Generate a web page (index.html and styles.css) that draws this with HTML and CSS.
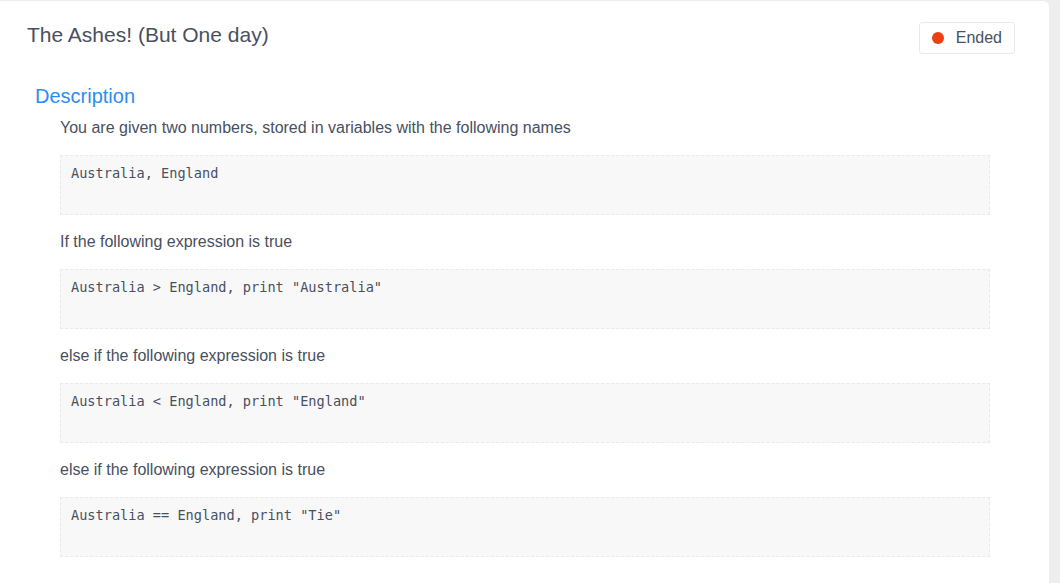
FILE: index.html
```html
<!DOCTYPE html>
<html>
<head>
<meta charset="utf-8">
<link rel="stylesheet" href="styles.css">
</head>
<body>
<div class="card">
  <div class="card-head">
    <div class="problem-title">The Ashes! (But One day)</div>
    <div class="status"><span class="dot"></span><span>Ended</span></div>
  </div>
  <div class="section">
    <div class="section-title">Description</div>
    <div class="content">
      <p>You are given two numbers, stored in variables with the following names</p>
      <pre>Australia, England</pre>
      <p>If the following expression is true</p>
      <pre>Australia &gt; England, print "Australia"</pre>
      <p>else if the following expression is true</p>
      <pre>Australia &lt; England, print "England"</pre>
      <p>else if the following expression is true</p>
      <pre>Australia == England, print "Tie"</pre>
    </div>
  </div>
</div>
</body>
</html>
```

FILE: styles.css
```css
html, body {
  margin: 0;
  padding: 0;
  background: #eeeeee;
  height: 100%;
  overflow: hidden;
}
body {
  padding: 1px 11px 0 0;
  box-sizing: border-box;
  font-family: "Liberation Sans", Arial, sans-serif;
  color: #495060;
}
.card {
  background: #ffffff;
  border-radius: 0 6px 0 0;
  height: 100%;
  box-sizing: border-box;
}
.card-head {
  display: flex;
  justify-content: space-between;
  align-items: flex-start;
  padding: 21px 34px 0 27px;
}
.problem-title {
  font-size: 21px;
  line-height: 26px;
}
.status {
  display: flex;
  align-items: center;
  height: 32px;
  box-sizing: border-box;
  padding: 0 12px;
  border: 1px solid #e9eaec;
  border-radius: 3px;
  font-size: 16px;
  gap: 12px;
  width: 96px;
}
.dot {
  width: 12px;
  height: 12px;
  border-radius: 50%;
  background: #ed3f14;
}
.section {
  padding: 0 0 0 35px;
  margin-top: 29px;
}
.section-title {
  font-size: 20px;
  line-height: 26px;
  color: #2d8cf0;
}
.content {
  margin-left: 25px;
  margin-right: 59px;
  padding-top: 7px;
}
.content p {
  margin: 0;
  font-size: 16px;
  line-height: 24px;
}
.content pre {
  margin: 15px 0 15px 0;
  height: 60px;
  box-sizing: border-box;
  padding: 8px 10px;
  background: #f8f8f9;
  border: 1px dashed #e9eaec;
  font-family: "DejaVu Sans Mono", "Liberation Mono", monospace;
  font-size: 13.6px;
  line-height: 18px;
  color: #495060;
}
```
